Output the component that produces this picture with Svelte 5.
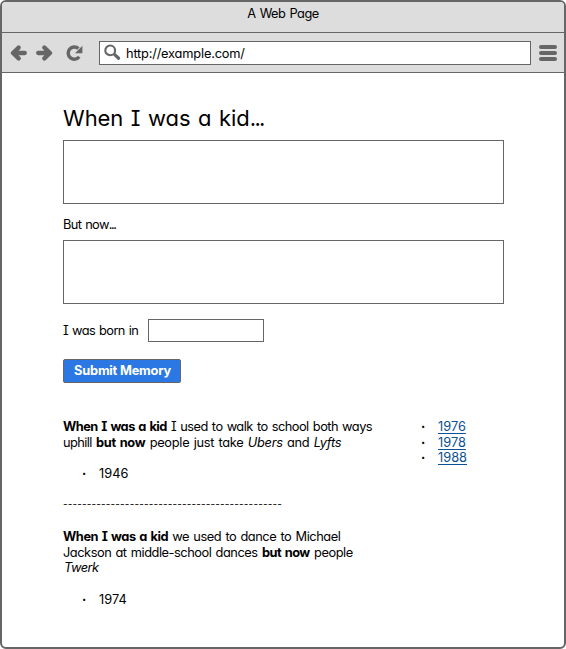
<script>
  let url = $state('http://example.com/');
  let kid = $state('');
  let now = $state('');
  let born = $state('');
  const years = ['1976', '1978', '1988'];
</script>

<div class="window">
  <header class="title"><span>A Web Page</span></header>
  <nav class="toolbar">
    <svg class="arrow" width="17" height="16" viewBox="0 0 17 16"><path d="M8.6 2.6 3 8l5.6 5.4M3.5 8h11.3" /></svg>
    <svg class="arrow next" width="17" height="16" viewBox="0 0 17 16"><path d="M8.4 2.6 14 8l-5.6 5.4M13.5 8H2.2" /></svg>
    <svg class="reload" width="17" height="16" viewBox="0 0 17 16"><path class="ring" d="M12.4 3.6A6.1 6.1 0 1 0 13.2 11.8" /><path class="tip" d="M16.4 .8v7.4H9z" /></svg>
    <div class="address">
      <svg width="17" height="17" viewBox="0 0 17 17"><circle cx="6.2" cy="6.4" r="4.9" /><path d="m10.7 10.6 3.9 3.6" /></svg>
      <input class="url" aria-label="Address" bind:value={url} />
    </div>
    <div class="menu"><i></i><i></i><i></i></div>
  </nav>

  <main>
    <h1>When I was a kid<span>...</span></h1>
    <textarea aria-label="When I was a kid" bind:value={kid}></textarea>
    <label class="but" for="now">But now<span>...</span></label>
    <textarea id="now" bind:value={now}></textarea>
    <div class="born"><label for="born">I was born in</label><input id="born" bind:value={born} /></div>
    <button>Submit Memory</button>

    <div class="columns">
      <section>
        <p><span class="wide"><b>When I was a kid</b> I used to walk to school both ways</span><br /><span class="tight">uphill</span> <b>but now</b> people just take <em>Ubers</em> and <em>Lyfts</em></p>
        <ul><li>1946</li></ul>
        <div class="rule">----------------------------------------------</div>
        <p><span class="medium"><b>When I was a kid</b> we used to dance to Michael</span><br /><span class="snug">Jackson at middle-school dances</span> <b class="close">but now</b> <span class="medium">people</span><br /><em class="twerk">Twerk</em></p>
        <ul><li>1974</li></ul>
      </section>
      <ul class="years">
        {#each years as year}
          <li><a href="#{year}">{year}</a></li>
        {/each}
      </ul>
    </div>
  </main>
</div>

<style>
  :global(body) { margin: 0; background: #fff; }
  .window {
    box-sizing: border-box; width: 566px; height: 649px;
    border: 2px solid #666; border-radius: 6px; overflow: hidden; background: #fff;
    font: 12.8px/15.7px Inter, "Liberation Sans", sans-serif;
    font-feature-settings: "cv11", "cv08"; color: #000;
  }
  input, textarea, button { box-sizing: border-box; font: inherit; font-feature-settings: inherit; color: inherit; letter-spacing: inherit; margin: 0; }
  .title { box-sizing: border-box; height: 31px; padding-top: 4px; background: #ddd; border-bottom: 1px solid #666; text-align: center; letter-spacing: -0.5px; word-spacing: 1px; }
  .toolbar { box-sizing: border-box; height: 40px; display: flex; align-items: center; background: #ddd; border-bottom: 1px solid #666; padding: 0 7px 0 8px; }
  svg { display: block; flex: none; fill: none; stroke: #666; }
  .arrow { stroke-width: 4.3; stroke-linecap: round; stroke-linejoin: round; }
  .next { margin-left: 9px; }
  .reload { margin-left: 13px; }
  .ring { stroke-width: 3.4; }
  .tip { fill: #666; stroke: none; }
  .address { box-sizing: border-box; width: 432px; height: 24px; margin-left: 16px; border: 1px solid #666; background: #fff; display: flex; align-items: center; padding-left: 4px; }
  .address svg { stroke-width: 2.1; }
  .address path { stroke-width: 3.2; stroke-linecap: round; }
  .url { flex: 1; border: 0; padding: 2px 0 0 5px; outline: 0; background: none; letter-spacing: -0.18px; }
  .menu { display: flex; flex-direction: column; gap: 2px; margin-left: 8px; }
  .menu i { width: 18px; height: 4px; border-radius: 2px; background: #666; }
  main { padding: 31px 0 0 61px; display: flex; flex-direction: column; align-items: flex-start; }
  h1 { margin: 0; font-size: 22px; line-height: 28px; font-weight: 400; height: 36px; letter-spacing: -0.05px; word-spacing: 1.4px; }
  h1 span { letter-spacing: -1.7px; }
  textarea { display: block; width: 441px; height: 64px; border: 1px solid #666; resize: none; background: #fff; border-radius: 0; outline: 0; }
  .but { height: 23px; padding-top: 13px; letter-spacing: -0.6px; word-spacing: 0.8px; }
  .but span { letter-spacing: -1.5px; }
  .born { display: flex; align-items: center; margin-top: 15px; letter-spacing: -0.6px; word-spacing: 1px; }
  .born label { width: 85px; }
  .born input { width: 116px; height: 23px; border: 1px solid #666; }
  button { width: 118px; height: 24px; margin-top: 17px; padding: 0 0 0 1px; border: 1px solid #666; border-radius: 2px; background: #2b78e4; color: #fff; font-weight: 700; letter-spacing: -0.2px; }
  .columns { display: flex; margin-top: 36px; }
  section { width: 339px; white-space: nowrap; }
  p { margin: 0; letter-spacing: -0.28px; word-spacing: 1px; }
  .wide { letter-spacing: -0.51px; }
  .medium { letter-spacing: -0.43px; }
  .tight { letter-spacing: -0.6px; }
  .snug { letter-spacing: -0.45px; }
  .close { letter-spacing: -0.5px; }
  .twerk { padding-left: 1px; letter-spacing: -0.5px; }
  ul { margin: 15.7px 0; padding: 0; list-style: none; }
  li { display: flex; padding-left: 19px; }
  li::before { content: "·"; width: 17px; font-weight: 700; }
  .rule { margin-bottom: 15.7px; font-size: 10px; letter-spacing: 0.16px; }
  .years { margin: 0; }
  a { color: #0b4f94; text-decoration: underline; text-underline-offset: 2px; text-decoration-skip-ink: none; }
</style>
